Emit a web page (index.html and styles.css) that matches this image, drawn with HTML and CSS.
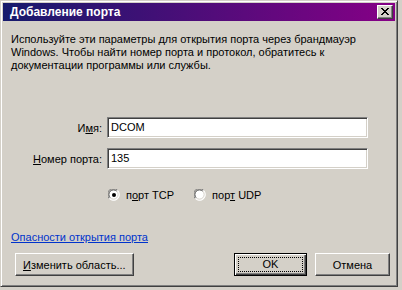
FILE: index.html
```html
<!DOCTYPE html>
<html lang="ru">
<head>
<meta charset="utf-8">
<title>Добавление порта</title>
<link rel="stylesheet" href="styles.css">
</head>
<body>
<div class="window">
  <div class="titlebar">
    <span class="title">Добавление порта</span>
    <span class="close">
      <svg width="8" height="7" viewBox="0 0 8 7" shape-rendering="crispEdges">
        <path d="M0 0h2v1h-2zM6 0h2v1h-2zM1 1h2v1h-2zM5 1h2v1h-2zM2 2h4v1h-4zM3 3h2v1h-2zM2 4h4v1h-4zM1 5h2v1h-2zM5 5h2v1h-2zM0 6h2v1h-2zM6 6h2v1h-2z" fill="#000"/>
      </svg>
    </span>
  </div>
  <div class="client">
    <p class="desc"><span class="line">Используйте эти параметры для открытия порта через брандмауэр</span><span class="line">Windows. Чтобы найти номер порта и протокол, обратитесь к</span><span class="line">документации программы или службы.</span></p>
    <div class="form">
      <label class="lbl">И<u>м</u>я:</label>
      <div class="edit">DCOM</div>
      <label class="lbl"><u>Н</u>омер порта:</label>
      <div class="edit">135</div>
    </div>
    <div class="radios">
      <span class="radio">
        <svg class="rb" width="12" height="12" viewBox="0 0 12 12">
          <circle cx="6" cy="6" r="5.5" fill="#fff"/>
          <path d="M1.2 9.5 A5.5 5.5 0 0 1 9.5 1.2" fill="none" stroke="#808080" stroke-width="1"/>
          <path d="M9.5 1.2 A5.5 5.5 0 0 1 1.2 9.5" fill="none" stroke="#fff" stroke-width="1"/>
          <path d="M2.2 8.8 A4.5 4.5 0 0 1 8.8 2.2" fill="none" stroke="#404040" stroke-width="1"/>
          <path d="M8.8 2.2 A4.5 4.5 0 0 1 2.2 8.8" fill="none" stroke="#d4d0c8" stroke-width="1"/>
          <circle cx="6" cy="6" r="2" fill="#000"/>
        </svg>
        <span>п<u>о</u>рт TCP</span>
      </span>
      <span class="radio">
        <svg class="rb" width="12" height="12" viewBox="0 0 12 12">
          <circle cx="6" cy="6" r="5.5" fill="#fff"/>
          <path d="M1.2 9.5 A5.5 5.5 0 0 1 9.5 1.2" fill="none" stroke="#808080" stroke-width="1"/>
          <path d="M9.5 1.2 A5.5 5.5 0 0 1 1.2 9.5" fill="none" stroke="#fff" stroke-width="1"/>
          <path d="M2.2 8.8 A4.5 4.5 0 0 1 8.8 2.2" fill="none" stroke="#404040" stroke-width="1"/>
          <path d="M8.8 2.2 A4.5 4.5 0 0 1 2.2 8.8" fill="none" stroke="#d4d0c8" stroke-width="1"/>
        </svg>
        <span>пор<u>т</u> UDP</span>
      </span>
    </div>
    <a class="link" href="#">Опасности открытия порта</a>
    <div class="buttons">
      <button class="btn scope"><u>И</u>зменить область...</button>
      <span class="spacer"></span>
      <button class="btn default"><span class="focus">OK</span></button>
      <button class="btn">Отмена</button>
    </div>
  </div>
</div>
</body>
</html>
```

FILE: styles.css
```css
* { box-sizing: border-box; }

body {
  margin: 0;
  background: #d4d0c8;
  font-family: "Liberation Sans", Arial, sans-serif;
  font-size: 11px;
  color: #000;
}

.window {
  width: 398px;
  height: 287px;
  background: #d4d0c8;
  border: 1px solid;
  border-color: #d4d0c8 #404040 #404040 #d4d0c8;
  box-shadow: inset 1px 1px 0 #fff, inset -1px -1px 0 #808080;
  padding: 2px;
  display: flex;
  flex-direction: column;
}

.titlebar {
  height: 18px;
  background: linear-gradient(to right, #161a6c, #860086);
  display: flex;
  align-items: center;
  padding: 0 2px 0 7px;
}

.title {
  flex: 1;
  color: #fff;
  font-weight: bold;
  font-size: 12px;
  white-space: nowrap;
}

.close {
  width: 16px;
  height: 14px;
  background: #d4d0c8;
  border: 1px solid;
  border-color: #fff #404040 #404040 #fff;
  box-shadow: inset -1px -1px 0 #808080;
  display: flex;
  align-items: center;
  justify-content: center;
  padding: 0 1px 1px 0;
}

.close svg { display: block; }

.client {
  flex: 1;
  display: flex;
  flex-direction: column;
  padding: 12px 5px 0 8px;
}

.desc {
  margin: 0;
  line-height: 13px;
}

.line {
  display: block;
  white-space: nowrap;
}

.form {
  margin-top: 45px;
  display: grid;
  grid-template-columns: 91px 261px;
  column-gap: 5px;
  row-gap: 10px;
  align-items: center;
}

.lbl {
  text-align: right;
  white-space: nowrap;
}

.edit {
  height: 21px;
  background: #fff;
  border: 1px solid;
  border-color: #808080 #fff #fff #808080;
  box-shadow: inset 1px 1px 0 #404040, inset -1px -1px 0 #d4d0c8;
  padding: 3px 0 0 3px;
  line-height: 13px;
}

.radios {
  margin-top: 19px;
  padding-left: 97px;
  display: flex;
  gap: 20px;
  height: 13px;
  align-items: center;
}

.radio {
  display: flex;
  align-items: center;
  gap: 6px;
}

.rb { display: block; }

.link {
  margin-top: 30px;
  align-self: flex-start;
  color: #0033cc;
  text-decoration: underline;
  line-height: 13px;
}

.buttons {
  margin-top: 9px;
  display: flex;
  padding-left: 4px;
}

.spacer { flex: 1; }

.btn {
  height: 23px;
  font: inherit;
  color: #000;
  background: #d4d0c8;
  border: 1px solid;
  border-color: #fff #404040 #404040 #fff;
  box-shadow: inset -1px -1px 0 #808080;
  padding: 0;
  width: 75px;
  margin-left: 8px;
}

.btn.scope {
  width: 119px;
  margin-left: 0;
  text-align: left;
  padding-left: 7px;
}

.btn.default {
  border: 1px solid #000;
  box-shadow: inset 1px 1px 0 #fff, inset -1px -1px 0 #404040, inset -2px -2px 0 #808080;
  padding: 3px;
  width: 73px;
}

.focus {
  display: block;
  height: 100%;
  border: 1px dotted #000;
  line-height: 13px;
}
```
